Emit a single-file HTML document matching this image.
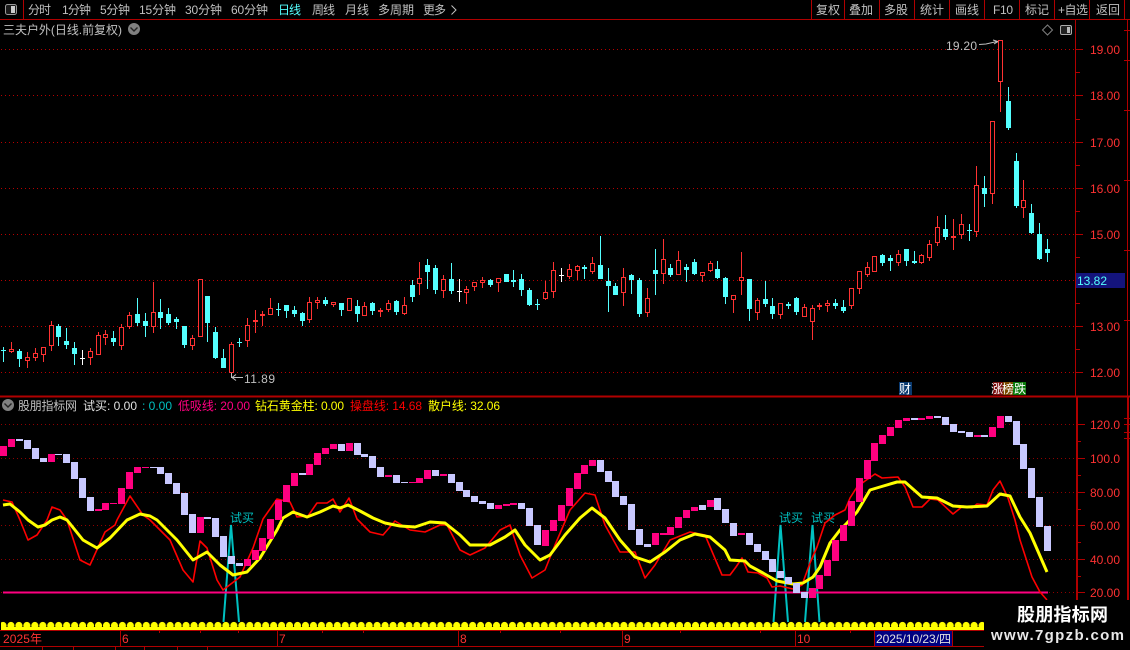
<!DOCTYPE html>
<html><head><meta charset="utf-8"><title>三夫户外</title>
<style>html,body{margin:0;padding:0;background:#000;width:1130px;height:650px;overflow:hidden}svg{display:block}text{font-family:"Liberation Sans","WenQuanYi Zen Hei","Noto Sans CJK SC",sans-serif;font-size:12px;fill:#c0c0c0}</style></head><body>
<svg width="1130" height="650" viewBox="0 0 1130 650" xmlns="http://www.w3.org/2000/svg">
<defs><pattern id="yb" patternUnits="userSpaceOnUse" x="-1" y="620" width="7.96" height="11"><circle cx="4" cy="5.5" r="3.6" fill="#ff0"/><rect x="0" y="7" width="8" height="4" fill="#ff0"/></pattern></defs>
<rect width="1130" height="650" fill="#000"/>
<!-- grid -->
<g stroke="#b80000" stroke-width="1" stroke-dasharray="1 3" fill="none" shape-rendering="crispEdges">
<path d="M1 49.5H1075M1 95.5H1075M1 142.5H1075M1 188.5H1075M1 234.5H1075M1 280.5H1075M1 326.5H1075M1 372.5H1075"/>
<path d="M1 424.5H1075M1 458.5H1075M1 492.5H1075M1 525.5H1075M1 559.5H1075M1 592.5H1075" stroke="#900000"/>
</g>
<!-- toolbar -->
<g fill="none" stroke="#b00000" shape-rendering="crispEdges">
<path d="M0 19.5H1130M23.5 0V19M811.5 0V19M844.5 0V19M879.5 0V19M914.5 0V19M949.5 0V19M984.5 0V19M1019.5 0V19M1054.5 0V19M1089.5 0V19M1124.5 0V19"/>
</g>
<rect x="5.5" y="4.5" width="11" height="10" rx="2" fill="#1a1a1a" stroke="#999"/><rect x="11" y="6" width="4" height="7" fill="#ccc"/>
<text x="28" y="14" textLength="23">分时</text>
<text x="62" y="14" textLength="29">1分钟</text>
<text x="100" y="14" textLength="30">5分钟</text>
<text x="139" y="14" textLength="37">15分钟</text>
<text x="185" y="14" textLength="37">30分钟</text>
<text x="231" y="14" textLength="37">60分钟</text>
<text x="278" y="14" textLength="23" style="fill:#54ffff">日线</text>
<text x="312" y="14" textLength="23">周线</text>
<text x="345" y="14" textLength="24">月线</text>
<text x="378" y="14" textLength="36">多周期</text>
<text x="423" y="14" textLength="23">更多</text>
<path d="M451.5 5.5L456 10L451.5 14.5" fill="none" stroke="#c0c0c0"/>
<text x="816" y="14" textLength="24">复权</text>
<text x="849" y="14" textLength="24">叠加</text>
<text x="884" y="14" textLength="24">多股</text>
<text x="920" y="14" textLength="24">统计</text>
<text x="955" y="14" textLength="24">画线</text>
<text x="993" y="14" textLength="20">F10</text>
<text x="1025" y="14" textLength="24">标记</text>
<text x="1058" y="14" textLength="30">+自选</text>
<text x="1096" y="14" textLength="24">返回</text>
<!-- title -->
<text x="3" y="34" textLength="119">三夫户外(日线.前复权)</text>
<circle cx="134" cy="29" r="6" fill="#808080"/><path d="M130.5 27.5L134 31L137.5 27.5" fill="none" stroke="#222" stroke-width="1.4"/>
<path d="M1047.5 25L1052.5 30L1047.5 35L1042.5 30Z" fill="none" stroke="#808080"/>
<rect x="1060.5" y="25.5" width="11" height="9" rx="1.5" fill="#222" stroke="#aaa"/><rect x="1067" y="27" width="3" height="6" fill="#bbb"/>
<text x="946" y="50" textLength="31">19.20</text>
<path d="M979 44.5L986 44L997 41.5M993 40L998 41.5L994 44" fill="none" stroke="#c0c0c0"/>
<text x="244" y="383" textLength="31">11.89</text>
<path d="M243 377.5H232M236 374.5L232 377.5L236 380.5M231.5 373V378" fill="none" stroke="#c0c0c0"/>
<!-- axes -->
<g fill="none" stroke="#b00000" shape-rendering="crispEdges">
<path d="M1075.5 20V396M1127.5 20V396"/>
<path d="M1076 49.5H1083M1076 95.5H1083M1076 142.5H1083M1076 188.5H1083M1076 234.5H1083M1076 280.5H1083M1076 326.5H1083M1076 372.5H1083M1076 72.5H1080M1076 119.5H1080M1076 165.5H1080M1076 211.5H1080M1076 257.5H1080M1076 303.5H1080M1076 349.5H1080"/>
<path d="M1124 30.5H1130M1124 60.5H1130M1124 110.5H1130M1124 180.5H1130M1124 250.5H1130M1124 320.5H1130"/>
<path d="M0 396.5H1130" stroke-width="2"/>
<path d="M1077 397V630M1128 397V600" stroke-width="2"/>
<path d="M1077 424.5H1085M1077 458.5H1085M1077 492.5H1085M1077 525.5H1085M1077 559.5H1085M1077 592.5H1085M1077 441.5H1081M1077 475.5H1081M1077 509.5H1081M1077 542.5H1081M1077 576.5H1081"/>
<path d="M1124 418.5H1130M1124 424.5H1130M1124 432.5H1130M1124 438.5H1130"/>
</g>
<g style="letter-spacing:0">
<text x="1090" y="54" style="fill:#ff3232">19.00</text>
<text x="1090" y="100" style="fill:#ff3232">18.00</text>
<text x="1090" y="147" style="fill:#ff3232">17.00</text>
<text x="1090" y="193" style="fill:#ff3232">16.00</text>
<text x="1090" y="239" style="fill:#ff3232">15.00</text>
<text x="1090" y="331" style="fill:#ff3232">13.00</text>
<text x="1090" y="377" style="fill:#ff3232">12.00</text>
<text x="1090" y="429" style="fill:#ff3232">120.0</text>
<text x="1090" y="463" style="fill:#ff3232">100.0</text>
<text x="1090" y="497" style="fill:#ff3232">80.00</text>
<text x="1090" y="530" style="fill:#ff3232">60.00</text>
<text x="1090" y="564" style="fill:#ff3232">40.00</text>
<text x="1090" y="597" style="fill:#ff3232">20.00</text>
</g>
<rect x="1076" y="273" width="49" height="15" fill="#14147c"/>
<text x="1077" y="285" style="fill:#54ffff">13.82</text>
<!-- candle wicks -->
<g fill="none" shape-rendering="crispEdges">
<path stroke="#54ffff" d="M3.5 347V362M19.5 349V367M58.5 324V346M66.5 328V349M74.5 342V365M113.5 331V346M137.5 298V326M145.5 313V337M160.5 299V329M168.5 308V325M176.5 317V329M184.5 326V348M207.5 296V342M215.5 327V359M223.5 349V368M239.5 338V347M278.5 303V316M286.5 305V318M294.5 306V317M302.5 312V326M325.5 297V306M341.5 303V316M357.5 300V322M372.5 302V315M396.5 300V315M412.5 280V302M427.5 259V289M435.5 265V294M451.5 263V294M490.5 279V287M513.5 270V287M521.5 274V296M529.5 288V306M537.5 299V310M584.5 265V279M600.5 236V279M608.5 268V312M615.5 283V295M631.5 274V294M639.5 278V317M655.5 249V295M670.5 264V277M686.5 264V282M694.5 259V275M717.5 261V279M725.5 277V304M749.5 279V321M765.5 281V307M772.5 298V319M788.5 302V309M796.5 297V315M835.5 299V309M843.5 300V313M882.5 254V266M890.5 255V271M906.5 249V266M914.5 251V264M945.5 215V240M969.5 224V241M984.5 176V207M1008.5 87V130M1016.5 153V208M1031.5 204V234M1039.5 223V260M1047.5 239V262"/>
<path stroke="#ff3232" d="M11.5 342V353M27.5 352V368M35.5 348V361M43.5 347V362M51.5 321V351M90.5 348V365M98.5 332V355M105.5 330V345M121.5 324V350M129.5 312V329M153.5 282V333M192.5 335V350M200.5 279V337M231.5 342V373M247.5 318V347M255.5 310V333M262.5 311V326M270.5 298V315M309.5 297V323M317.5 297V309M333.5 302V307M349.5 298V311M364.5 302V316M380.5 308V317M388.5 300V312M404.5 297V315M419.5 262V295M443.5 275V298M466.5 286V304M474.5 282V291M482.5 277V288M498.5 278V292M545.5 281V300M553.5 262V298M569.5 264V279M577.5 265V280M592.5 257V274M623.5 268V306M647.5 288V317M663.5 239V284M678.5 251V275M702.5 272V282M710.5 261V272M733.5 295V313M741.5 252V295M757.5 298V320M780.5 303V319M804.5 304V317M812.5 305V340M819.5 303V310M827.5 300V312M851.5 288V309M859.5 271V294M867.5 262V277M874.5 256V272M898.5 250V266M921.5 254V264M929.5 240V261M937.5 216V246M953.5 219V250M961.5 214V239M976.5 166V237M992.5 121V204M1000.5 40V112M1023.5 180V218"/>
<path stroke="#fff" d="M82.5 350V365M459.5 279V302M561.5 268V282M80 358.5H85M457 291.5H462M559 275.5H564"/>
</g>
<!-- cyan bodies -->
<path fill="#54ffff" shape-rendering="crispEdges" d="M1 350h5V351h-5zM17 351h5V359h-5zM56 326h5V337h-5zM64 341h5V345h-5zM72 348h5V354h-5zM111 338h5V342h-5zM135 314h5V323h-5zM143 321h5V326h-5zM158 312h5V318h-5zM166 314h5V323h-5zM174 319h5V322h-5zM182 326h5V345h-5zM205 296h5V323h-5zM213 332h5V358h-5zM221 358h5V368h-5zM237 342h5V343h-5zM276 309h5V310h-5zM284 305h5V311h-5zM292 310h5V314h-5zM300 313h5V321h-5zM323 300h5V304h-5zM339 303h5V310h-5zM355 306h5V314h-5zM370 303h5V311h-5zM394 301h5V312h-5zM410 285h5V297h-5zM425 265h5V272h-5zM433 268h5V290h-5zM449 279h5V291h-5zM488 280h5V285h-5zM504 274h5V282h-5zM511 280h5V282h-5zM519 279h5V290h-5zM527 290h5V305h-5zM535 304h5V305h-5zM582 267h5V269h-5zM598 265h5V279h-5zM606 281h5V286h-5zM613 286h5V295h-5zM629 275h5V280h-5zM637 280h5V314h-5zM653 270h5V274h-5zM668 268h5V275h-5zM684 267h5V270h-5zM692 262h5V274h-5zM715 269h5V278h-5zM723 278h5V297h-5zM747 279h5V309h-5zM763 299h5V304h-5zM770 306h5V314h-5zM786 304h5V306h-5zM794 298h5V312h-5zM833 303h5V306h-5zM841 307h5V311h-5zM880 255h5V263h-5zM888 258h5V261h-5zM904 249h5V261h-5zM912 261h5V263h-5zM943 229h5V237h-5zM967 230h5V231h-5zM982 188h5V194h-5zM1006 101h5V128h-5zM1014 161h5V206h-5zM1029 213h5V233h-5zM1037 234h5V259h-5zM1045 249h5V253h-5z"/>
<!-- red bodies -->
<path fill="#000" stroke="#ff3232" shape-rendering="crispEdges" d="M9.5 349.5h4V351.5h-4zM25.5 357.5h4V360.5h-4zM33.5 353.5h4V357.5h-4zM41.5 347.5h4V354.5h-4zM49.5 325.5h4V345.5h-4zM88.5 351.5h4V357.5h-4zM96.5 335.5h4V354.5h-4zM103.5 334.5h4V337.5h-4zM119.5 327.5h4V345.5h-4zM127.5 315.5h4V326.5h-4zM151.5 312.5h4V326.5h-4zM190.5 338.5h4V345.5h-4zM198.5 279.5h4V336.5h-4zM229.5 344.5h4V372.5h-4zM245.5 325.5h4V340.5h-4zM253.5 320.5h4V321.5h-4zM260.5 314.5h4V315.5h-4zM268.5 308.5h4V314.5h-4zM307.5 302.5h4V319.5h-4zM315.5 300.5h4V302.5h-4zM331.5 302.5h4V304.5h-4zM347.5 298.5h4V310.5h-4zM362.5 306.5h4V315.5h-4zM378.5 310.5h4V311.5h-4zM386.5 303.5h4V309.5h-4zM402.5 305.5h4V313.5h-4zM417.5 278.5h4V283.5h-4zM441.5 279.5h4V290.5h-4zM464.5 289.5h4V292.5h-4zM472.5 282.5h4V286.5h-4zM480.5 280.5h4V282.5h-4zM496.5 278.5h4V282.5h-4zM543.5 292.5h4V298.5h-4zM551.5 270.5h4V291.5h-4zM567.5 269.5h4V276.5h-4zM575.5 266.5h4V270.5h-4zM590.5 263.5h4V271.5h-4zM621.5 277.5h4V292.5h-4zM645.5 298.5h4V312.5h-4zM661.5 259.5h4V273.5h-4zM676.5 260.5h4V274.5h-4zM700.5 272.5h4V275.5h-4zM708.5 263.5h4V270.5h-4zM731.5 295.5h4V299.5h-4zM739.5 277.5h4V280.5h-4zM755.5 300.5h4V312.5h-4zM778.5 303.5h4V314.5h-4zM802.5 307.5h4V316.5h-4zM810.5 308.5h4V321.5h-4zM817.5 305.5h4V306.5h-4zM825.5 303.5h4V305.5h-4zM849.5 288.5h4V305.5h-4zM857.5 271.5h4V288.5h-4zM865.5 267.5h4V274.5h-4zM872.5 256.5h4V271.5h-4zM896.5 254.5h4V262.5h-4zM919.5 255.5h4V262.5h-4zM927.5 244.5h4V257.5h-4zM935.5 227.5h4V242.5h-4zM951.5 236.5h4V237.5h-4zM959.5 224.5h4V234.5h-4zM974.5 185.5h4V231.5h-4zM990.5 121.5h4V193.5h-4zM998.5 40.5h4V81.5h-4zM1021.5 200.5h4V207.5h-4z"/>
<!-- tags -->
<rect x="899" y="382" width="13" height="13" fill="#0a3a70"/><text x="899" y="393" style="fill:#fff">财</text>
<rect x="993" y="382" width="10" height="13" fill="#7a1010"/><rect x="1003" y="382" width="10" height="13" fill="#7a4a00"/><rect x="1013" y="382" width="13" height="13" fill="#0a7a0a"/>
<text x="991" y="393" style="fill:#fff">涨</text><text x="1002" y="393" style="fill:#fff">榜</text><text x="1014" y="393" style="fill:#fff">跌</text>
<!-- lower title -->
<circle cx="8" cy="405" r="6" fill="#808080"/><path d="M4.5 403.5L8 407L11.5 403.5" fill="none" stroke="#222" stroke-width="1.4"/>
<text x="18" y="410" textLength="59">股朋指标网</text>
<text x="83" y="410" textLength="54" style="fill:#e0e0e0">试买: 0.00</text>
<text x="142" y="410" textLength="30" style="fill:#00c0c0">: 0.00</text>
<text x="178" y="410" textLength="72" style="fill:#ff0080">低吸线: 20.00</text>
<text x="255" y="410" textLength="89" style="fill:#ffff00">钻石黄金柱: 0.00</text>
<text x="350" y="410" textLength="72" style="fill:#ff0000">操盘线: 14.68</text>
<text x="428" y="410" textLength="72" style="fill:#ffff00">散户线: 32.06</text>
<!-- spikes -->
<path d="M223.5 622L231 525L239 622M773.5 622L780.5 525L788 622M805 622L812.5 525L819.5 622" fill="none" stroke="#00c0c0" stroke-width="2"/>
<text x="230" y="522" style="fill:#00c0c0">试买</text><text x="779" y="522" style="fill:#00c0c0">试买</text><text x="811" y="522" style="fill:#00c0c0">试买</text>
<!-- magenta line -->
<path d="M3 592.5H1048" stroke="#ff0080" stroke-width="2" fill="none"/>
<!-- red line -->
<path fill="none" stroke="#ff0000" stroke-width="1.6" stroke-linejoin="round" d="M3 500L12 502L20 520L28 540L37 535L47 520L52 507L60 510L67 520L80 560L90 565L105 532L115 525L117 520L130 496L143 515L150 520L170 540L183 570L193 582L200 541L207 548L217 580L223 590L240 577L253 548L263 519L277 499L290 502L297 517L308 516L317 503L327 503L333 499L340 512L349 498L357 519L370 532L383 535L395 521L410 530L425 532L440 525L447 525L460 550L470 555L485 548L500 530L510 525L520 555L532 578L545 570L555 545L570 510L585 493L595 495L605 525L620 552L635 552L645 578L655 565L670 540L690 532L705 535L722 575L730 575L736 567L742 558L748 572L758 573L767 578L772 587L780 586L793 589L802 585L810 563L817 547L825 523L835 515L845 510L850 498L857 487L865 481L875 474L882 478L898 477L905 487L913 507L922 507L930 499L938 500L953 514L963 506L972 508L977 504L987 505L993 490L1000 481L1008 498L1015 520L1020 540L1032 577L1040 592L1047 600"/>
<!-- yellow line -->
<path fill="none" stroke="#ffff00" stroke-width="3" stroke-linejoin="round" d="M3 505L10 504L20 512L28 520L38 527L45 525L52 520L60 517L67 520L83 540L97 548L110 538L127 520L140 514L150 516L157 520L177 540L193 560L207 552L220 565L233 575L247 572L260 558L277 530L283 518L293 512L307 517L320 512L333 506L340 508L348 505L360 511L373 518L385 523L400 526L415 527L430 522L445 523L460 535L470 545L490 545L505 537L515 530L525 545L540 560L550 555L565 535L580 518L592 508L605 518L620 540L635 557L650 562L665 552L680 540L695 534L710 537L725 550L730 560L745 561L750 566L763 573L777 581L793 584L803 583L813 577L820 567L830 543L840 530L847 523L857 512L870 490L880 487L897 482L905 482L922 497L937 498L953 506L967 507L987 506L1000 494L1010 496L1020 517L1030 533L1047 572"/>
<!-- indicator bars -->
<path fill="#c8c8ff" shape-rendering="crispEdges" d="M16 439h7V441h-7zM24 440h7V449h-7zM32 448h7V459h-7zM40 458h7V462h-7zM55 454h7V455h-7zM63 454h7V463h-7zM71 462h7V479h-7zM79 478h7V498h-7zM87 497h7V511h-7zM150 467h7V468h-7zM157 467h7V474h-7zM165 473h7V484h-7zM173 483h7V494h-7zM181 493h7V515h-7zM189 514h7V533h-7zM204 517h7V519h-7zM212 518h7V537h-7zM220 536h7V557h-7zM228 556h7V564h-7zM236 563h7V566h-7zM299 473h7V475h-7zM338 444h7V451h-7zM354 443h7V455h-7zM361 454h7V457h-7zM369 456h7V468h-7zM377 467h7V477h-7zM393 475h7V483h-7zM401 482h7V483h-7zM432 470h7V476h-7zM448 474h7V483h-7zM456 482h7V491h-7zM463 490h7V497h-7zM471 496h7V502h-7zM479 501h7V504h-7zM487 503h7V509h-7zM518 503h7V509h-7zM526 508h7V526h-7zM534 525h7V545h-7zM597 460h7V472h-7zM605 471h7V482h-7zM612 481h7V497h-7zM620 496h7V505h-7zM628 504h7V530h-7zM636 529h7V545h-7zM644 544h7V547h-7zM699 505h7V510h-7zM714 498h7V510h-7zM722 509h7V523h-7zM730 523h7V536h-7zM746 533h7V545h-7zM754 544h7V552h-7zM762 551h7V560h-7zM769 559h7V572h-7zM777 571h7V578h-7zM785 577h7V584h-7zM793 583h7V593h-7zM801 592h7V598h-7zM911 418h7V420h-7zM934 416h7V418h-7zM942 417h7V425h-7zM950 424h7V432h-7zM958 431h7V433h-7zM966 432h7V437h-7zM981 435h7V437h-7zM1005 416h7V422h-7zM1013 421h7V445h-7zM1020 444h7V469h-7zM1028 468h7V498h-7zM1036 497h7V527h-7zM1044 526h7V551h-7z"/>
<path fill="#ff0080" shape-rendering="crispEdges" d="M0 446h7V456h-7zM8 439h7V447h-7zM48 454h7V462h-7zM95 509h7V511h-7zM102 503h7V510h-7zM110 503h7V504h-7zM118 488h7V504h-7zM126 472h7V489h-7zM134 467h7V473h-7zM142 467h7V468h-7zM197 517h7V533h-7zM244 559h7V566h-7zM252 550h7V560h-7zM259 538h7V551h-7zM267 519h7V539h-7zM275 500h7V520h-7zM283 485h7V502h-7zM291 473h7V486h-7zM306 464h7V475h-7zM314 453h7V465h-7zM322 448h7V454h-7zM330 444h7V449h-7zM346 443h7V451h-7zM385 475h7V477h-7zM409 482h7V483h-7zM416 478h7V483h-7zM424 470h7V479h-7zM440 474h7V476h-7zM495 505h7V509h-7zM503 504h7V506h-7zM510 503h7V505h-7zM542 530h7V546h-7zM550 520h7V531h-7zM558 505h7V521h-7zM566 488h7V506h-7zM574 473h7V489h-7zM581 465h7V474h-7zM589 460h7V466h-7zM652 533h7V545h-7zM660 533h7V535h-7zM667 527h7V535h-7zM675 517h7V528h-7zM683 510h7V518h-7zM691 507h7V511h-7zM707 500h7V507h-7zM738 533h7V535h-7zM809 588h7V598h-7zM816 575h7V589h-7zM824 560h7V576h-7zM832 540h7V561h-7zM840 525h7V541h-7zM848 501h7V526h-7zM856 478h7V502h-7zM864 460h7V479h-7zM871 443h7V461h-7zM879 435h7V444h-7zM887 427h7V436h-7zM895 420h7V428h-7zM903 418h7V421h-7zM918 418h7V420h-7zM926 416h7V419h-7zM974 435h7V437h-7zM989 427h7V437h-7zM997 416h7V428h-7z"/>
<!-- yellow row -->
<rect x="1" y="620" width="983" height="10.5" fill="url(#yb)"/>
<!-- bottom axis -->
<g fill="none" stroke="#b00000" shape-rendering="crispEdges">
<path d="M0 630.5H1130M0 646.5H1130M120.5 631V646M277.5 631V646M458.5 631V646M622.5 631V646M795.5 631V646M874.5 631V646M952.5 631V646"/>
<path d="M42.5 647V650M73.5 647V650M115.5 647V650M144.5 647V650M177.5 647V650M207.5 647V650M159.5 631V633M200.5 631V633M238.5 631V633M322.5 631V633M363.5 631V633M500.5 631V633M560.5 631V633M680.5 631V633M760.5 631V633M850.5 631V633"/>
</g>
<text x="3" y="643" textLength="39" style="fill:#ff3232">2025年</text>
<text x="122" y="643" style="fill:#ff3232">6</text>
<text x="279" y="643" style="fill:#ff3232">7</text>
<text x="460" y="643" style="fill:#ff3232">8</text>
<text x="624" y="643" style="fill:#ff3232">9</text>
<text x="797" y="643" style="fill:#ff3232">10</text>
<rect x="875" y="631" width="77" height="15" fill="#000080"/>
<text x="876" y="643" textLength="75" style="fill:#e0e0e0">2025/10/23/四</text>
<!-- watermark -->
<rect x="984" y="600" width="146" height="50" fill="#000"/>
<text x="1017" y="621" textLength="91" style="fill:#fff;font-size:18px;font-weight:bold">股朋指标网</text>
<text x="991" y="640" textLength="133" style="fill:#e8e8e8;font-size:15px;font-weight:bold">www.7gpzb.com</text>
</svg>
</body></html>
